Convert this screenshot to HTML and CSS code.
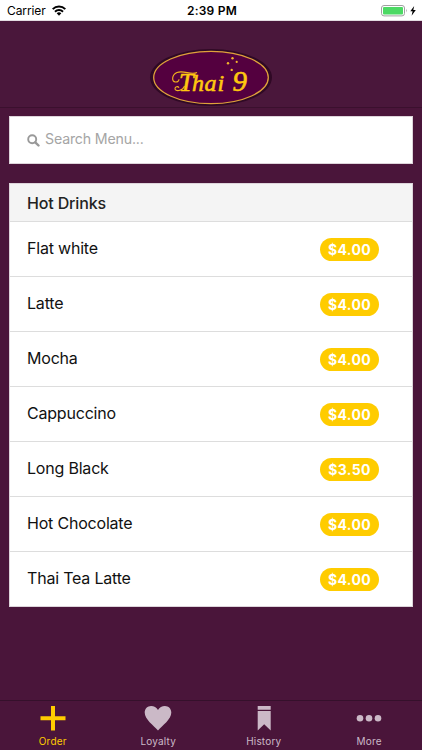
FILE: index.html
```html
<!DOCTYPE html>
<html lang="en">
<head>
<meta charset="utf-8">
<title>Thai 9</title>
<link rel="stylesheet" href="styles.css">
</head>
<body>
<div class="app">
  <div class="status">
    <div class="carrier"><span>Carrier</span>
      <svg width="14" height="11" viewBox="0 0 14 11"><g fill="none" stroke="#000" stroke-width="2"><path d="M.7 4.1a9 9 0 0 1 12.6 0"/><path d="M3 6.7a5.7 5.7 0 0 1 8 0"/></g><path d="M4.7 8.3a3.3 3.3 0 0 1 4.6 0L7 10.7z"/></svg>
    </div>
    <div class="time">2:39 PM</div>
    <div class="power">
      <svg width="36" height="12" viewBox="0 0 36 12"><rect x=".5" y=".5" width="23" height="10.4" rx="2.5" fill="#fff" stroke="#a0a0a0"/><rect x="2" y="2" width="20" height="7.4" rx="1" fill="#4cd964"/><path d="M25 3.8q1.5 1.8 0 3.6z" fill="#a0a0a0"/><path d="M33.2.9 29.3 6.3h2.3l-1 4.4 4.2-5.7h-2.5z"/></svg>
    </div>
  </div>
  <header class="header">
    <svg class="logo" width="124" height="60" viewBox="0 0 124 60">
      <ellipse cx="62" cy="30.500" rx="61" ry="28.500" fill="#2f0925"/>
      <ellipse cx="62" cy="30.500" rx="57.3" ry="26.2" fill="#54003f" stroke="#dfa13b" stroke-width="1.3"/>
      <text class="logo-text"><tspan x="30" y="43.500">T</tspan><tspan class="small" x="43" y="43.500">h</tspan><tspan class="small" x="55.500" y="43.500">a</tspan><tspan class="small" x="68.500" y="43.500">i</tspan><tspan class="nine" x="83.500" y="43.500">9</tspan></text>
      <path d="M48 25.500C42 28.500 35 23 28 25.500c-5.500 2.500-5.500 9-1.500 9.500 2.300.2 3.500-1.300 3.500-2.800M35.500 39c-2 5-9.500 6-9.500 2.500 0-2 3-2.500 4-.8" fill="none" stroke="#f5b51c" stroke-width="1.100"/>
      <g fill="#f2b52b"><circle cx="83.500" cy="11.300" r="1.200"/><circle cx="79" cy="16.200" r="1.200"/><circle cx="87.700" cy="14.900" r="1.100"/><circle cx="82.700" cy="22.900" r="1.200"/></g>
    </svg>
  </header>
  <main class="content">
    <div class="search">
      <svg width="13" height="13" viewBox="0 0 13 13"><circle cx="5.200" cy="5.200" r="4" fill="none" stroke="#999" stroke-width="1.900"/><path d="m8.300 8.300 3.200 3.200" stroke="#999" stroke-width="2.400" stroke-linecap="round"/></svg>
      <span>Search Menu...</span>
    </div>
    <section class="menu">
      <h2>Hot Drinks</h2>
      <div class="row"><span>Flat white</span><b>$4.00</b></div>
      <div class="row"><span>Latte</span><b>$4.00</b></div>
      <div class="row"><span>Mocha</span><b>$4.00</b></div>
      <div class="row"><span>Cappuccino</span><b>$4.00</b></div>
      <div class="row"><span>Long Black</span><b>$3.50</b></div>
      <div class="row"><span>Hot Chocolate</span><b>$4.00</b></div>
      <div class="row"><span>Thai Tea Latte</span><b>$4.00</b></div>
    </section>
  </main>
  <nav class="tabs">
    <div class="tab active"><svg width="28" height="26" viewBox="0 0 28 26"><path d="M12 1h4v10.300h10.500v4H16v10.200h-4V15.300H1.500v-4H12z"/></svg><span>Order</span></div>
    <div class="tab"><svg width="28" height="26" viewBox="0 0 28 26"><path d="M14 25.400C9.500 20.500.7 14.500.7 7.600.7 3.800 3.500 1 7.100 1 10 1 12.500 2.400 14 5c1.500-2.600 4-4 6.900-4 3.600 0 6.400 2.800 6.400 6.600 0 6.900-8.800 12.900-13.300 17.800z"/></svg><span>Loyalty</span></div>
    <div class="tab"><svg width="28" height="26" viewBox="0 0 28 26"><path d="M7.700 1h13v3.700h-13zM7.700 6h13v19.500l-6.500-6.200-6.500 6.200z"/></svg><span>History</span></div>
    <div class="tab"><svg width="28" height="26" viewBox="0 0 28 26"><circle cx="5" cy="13.200" r="3.300"/><circle cx="14" cy="13.200" r="3.300"/><circle cx="23" cy="13.200" r="3.300"/></svg><span>More</span></div>
  </nav>
</div>
</body>
</html>
```
FILE: styles.css
```css
* { box-sizing: border-box; }
body { margin: 0; font-family: Inter, "Liberation Sans", sans-serif; color: #111; }
svg { display: block; flex: none; }
.app { width: 422px; height: 750px; display: flex; flex-direction: column; background: #4a153a; overflow: hidden; }
.status { height: 21px; flex: none; background: #fff; display: grid; grid-template-columns: 1fr auto 1fr; align-items: center; padding: 1px 5px 0 7px; border-bottom: 1px solid #e4dce2; color: #000; }
.carrier { display: flex; align-items: center; gap: 6px; font-size: 12px; letter-spacing: -.1px; }
.time { font-size: 12px; font-weight: 600; letter-spacing: .2px; }
.power { display: flex; justify-content: flex-end; }
.header { height: 87px; flex: none; background: #4a173b; border-bottom: 1px solid #3b102e; display: flex; justify-content: center; padding-top: 26px; }
.logo-text { fill: #ffc80f; stroke: #ffc80f; stroke-width: .6px; font: italic 26px "Liberation Serif", serif; }
.logo-text .small { font-size: 24px; }
.logo-text .nine { font-size: 29px; }
.content { flex: 1; padding: 8px 9px 0; }
.search { height: 48px; background: #fff; border: 1px solid #ddd4da; display: flex; align-items: center; gap: 5px; padding-left: 17px; font-size: 14px; color: #a5a5a5; letter-spacing: -.18px; }
.search span { padding-bottom: 3px; font-size: 14.2px; }
.search svg { margin-top: 1px; }
.search, .menu { width: 404px; }
.menu { margin-top: 19px; height: 424px; background: #fff; border: 1px solid #ddd4da; }
h2 { margin: 0; height: 38px; background: #f4f4f4; border-bottom: 1px solid #ddd; padding: 1px 17px 0; font-size: 16px; line-height: 37px; font-weight: 500; letter-spacing: -.15px; color: #222; }
.row { height: 55px; border-bottom: 1px solid #ddd; display: flex; align-items: center; justify-content: space-between; padding: 0 33px 0 17px; font-size: 16px; letter-spacing: -.2px; color: #111; }
.row:last-child { border-bottom: 0; height: 54px; }
.row span { padding-bottom: 3px; }
.row b { width: 59px; height: 23px; margin-top: 1px; border-radius: 11.5px; background: #fc0; color: #fff; font-size: 14px; font-weight: 700; line-height: 23px; text-align: center; letter-spacing: .3px; }
.tabs { height: 50px; flex: none; border-top: 1px solid #35102b; display: grid; grid-template-columns: repeat(4, 1fr); }
.tab { display: flex; flex-direction: column; align-items: center; padding-top: 4px; color: #cbb9c7; fill: currentColor; font-size: 10px; letter-spacing: .2px; }
.tab span { margin-top: 4px; line-height: 12px; }
.active { color: #fc0; }
```
